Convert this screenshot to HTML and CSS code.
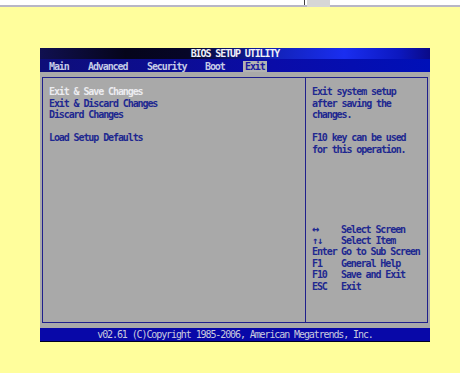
FILE: index.html
```html
<!DOCTYPE html>
<html>
<head>
<meta charset="utf-8">
<link rel="stylesheet" href="styles.css">
</head>
<body>
<div class="topstrip">
  <div class="topspacer"></div>
  <div class="vline"></div>
  <div class="tab"></div>
</div>
<div class="bios">
  <div class="title">BIOS SETUP UTILITY</div>
  <div class="menubar">
    <span class="mi">Main</span>
    <span class="mi">Advanced</span>
    <span class="mi">Security</span>
    <span class="mi">Boot</span>
    <span class="mi sel">Exit</span>
  </div>
  <div class="body">
    <div class="box">
      <div class="left">
        <div class="opt active">Exit &amp; Save Changes</div>
        <div class="opt">Exit &amp; Discard Changes</div>
        <div class="opt">Discard Changes</div>
        <div class="opt blank">&nbsp;</div>
        <div class="opt">Load Setup Defaults</div>
      </div>
      <div class="right">
        <div class="desc">
          <div>Exit system setup</div>
          <div>after saving the</div>
          <div>changes.</div>
          <div>&nbsp;</div>
          <div>F10 key can be used</div>
          <div>for this operation.</div>
        </div>
        <div class="help">
          <span class="k arrow">&harr;</span><span>Select Screen</span>
          <span class="k">&uarr;&darr;</span><span>Select Item</span>
          <span class="k">Enter</span><span>Go to Sub Screen</span>
          <span class="k">F1</span><span>General Help</span>
          <span class="k">F10</span><span>Save and Exit</span>
          <span class="k">ESC</span><span>Exit</span>
        </div>
      </div>
    </div>
  </div>
  <div class="footer">v02.61 (C)Copyright 1985-2006, American Megatrends, Inc.</div>
</div>
</body>
</html>
```

FILE: styles.css
```css
html, body {
  margin: 0;
  padding: 0;
}
body {
  background: #fffe9c;
  width: 460px;
  height: 373px;
  overflow: hidden;
  font-family: "DejaVu Sans Mono", "Liberation Mono", monospace;
}
.topstrip {
  display: flex;
  height: 5px;
  background: #ffffff;
  border-bottom: 2px solid #b8b6c6;
}
.topspacer {
  width: 304px;
}
.vline {
  width: 1px;
  background: #404040;
}
.tab {
  width: 23px;
  margin-left: 2px;
  height: 7px;
  background: #d6d6d6;
}
.bios {
  margin: 41px 0 0 40px;
  width: 390px;
  background: #a9a9a9;
  font-size: 10px;
  font-weight: bold;
  letter-spacing: -1.1px;
}
.title {
  height: 11px;
  line-height: 11px;
  text-align: center;
  color: #f0f0f8;
  background: linear-gradient(to right, #101050 0%, #05051a 22%, #060628 38%, #1222b8 60%, #1a2ef0 78%, #0c18c0 92%, #0a0a88 100%);
}
.menubar {
  display: grid;
  grid-template-columns: 39px 59px 58px 38px auto;
  padding-left: 9px;
  height: 13px;
  align-items: end;
  background: linear-gradient(to right, #0e0e78, #0a0ca8 60%, #0010b8);
}
.mi {
  color: #c4cae6;
  line-height: 11px;
}
.mi.sel {
  justify-self: start;
  background: #b2b2b2;
  color: #1a1aa0;
  padding: 0 2px;
}
.body {
  padding: 5px 2px 5px 2px;
}
.box {
  display: flex;
  height: 244px;
  border: 1px solid #20208c;
}
.left {
  width: 256px;
  padding: 8px 0 0 6px;
  border-right: 1px solid #20208c;
  line-height: 11.5px;
  color: #1e2890;
}
.opt.active {
  color: #ececf0;
}
.right {
  flex: 1;
  display: flex;
  flex-direction: column;
  padding: 8px 0 0 6px;
  line-height: 11.5px;
  color: #1e2890;
}
.help {
  margin-top: auto;
  margin-bottom: 30px;
  display: grid;
  grid-template-columns: 29px auto;
  line-height: 11.4px;
}
.arrow {
  font-size: 12px;
  line-height: 11.4px;
}
.footer {
  height: 13px;
  line-height: 13px;
  text-align: center;
  background: #0808a8;
  border-bottom: 1px solid #000020;
  color: #c8cade;
  font-weight: normal;
}
```
